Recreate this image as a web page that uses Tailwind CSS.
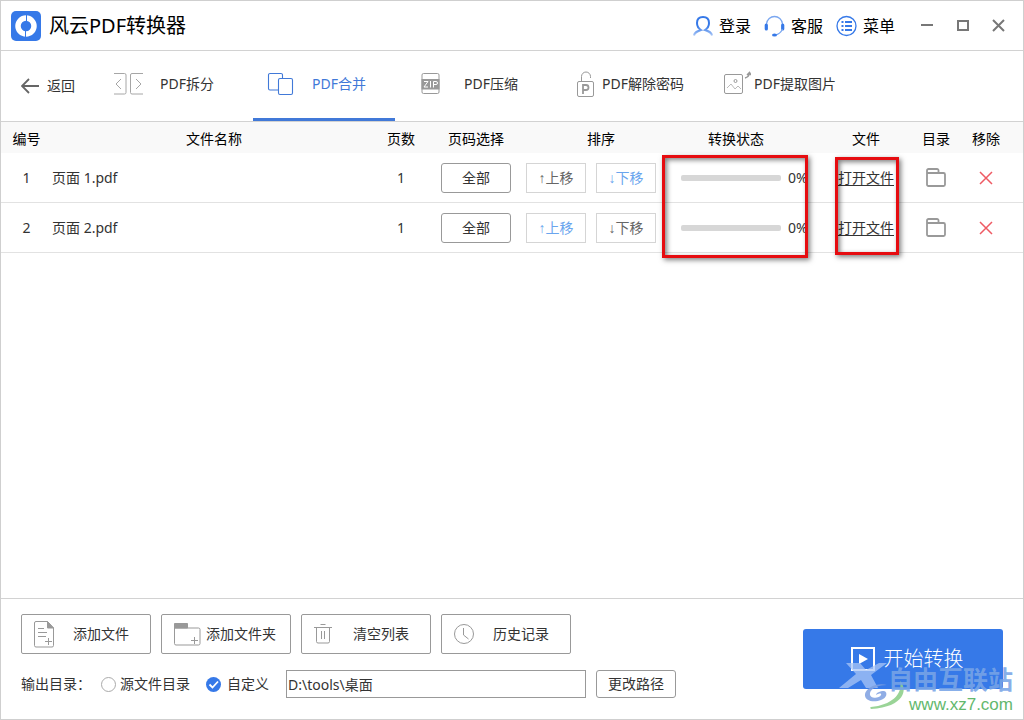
<!DOCTYPE html>
<html lang="zh-CN">
<head>
<meta charset="utf-8">
<meta name="viewport" content="width=device-width, initial-scale=1">
<title>风云PDF转换器</title>
<script src="https://cdn.jsdelivr.net/npm/@tailwindcss/browser@4"></script>
</head>
<body class="min-h-screen flex flex-col bg-white border border-[#cfcfcf] text-sm leading-5 text-[#333] font-['Noto_Sans','Noto_Sans_CJK_SC',sans-serif]">

<!-- Title bar -->
<header class="h-[50px] flex items-center border-b border-[#d2d2d2] pl-2.5 pr-4 text-black">
  <svg class="size-[30px] shrink-0" viewBox="0 0 30 30" aria-hidden="true">
    <rect width="30" height="30" rx="5" fill="#3679e8"/>
    <circle cx="15" cy="15" r="8" fill="none" stroke="#fff" stroke-width="5.5"/>
    <path d="M15.500 3v7M14.500 20v7" stroke="#3679e8" stroke-width="1"/>
  </svg>
  <h1 class="ml-2 text-xl leading-7 font-normal">风云PDF转换器</h1>
  <nav class="ml-auto flex items-center gap-[13px] text-base leading-6" aria-label="账户">
    <button type="button" class="flex items-center gap-1.5">
      <svg class="w-5 h-[22px]" viewBox="0 0 20 22" fill="none" aria-hidden="true">
        <defs><linearGradient id="fade" x1="0" y1="0" x2="0" y2="1"><stop offset="0.5" stop-color="#3679e8"/><stop offset="1" stop-color="#a9c6f6"/></linearGradient></defs>
        <path d="M1 20.500C1.500 17 4 16.500 8 15C5.500 13.500 4 11 4 8C4 4 6.500 2 10 2S16 4 16 8C16 11 14.500 13.500 12 15C16 16.500 18.500 17 19 20.500" stroke="url(#fade)" stroke-width="2"/>
      </svg>登录</button>
    <button type="button" class="flex items-center gap-1.5">
      <svg class="w-[21px] h-[22px]" viewBox="0 0 21 22" fill="none" aria-hidden="true">
        <path d="M2.500 9C3 4.500 6.500 1.500 10.500 1.500S18 4.500 18.500 9" stroke="#7ba7f0" stroke-width="1.300"/>
        <path d="M2.300 10v4M18.700 10v4" stroke="#3679e8" stroke-width="3.200" stroke-linecap="round"/>
        <path d="M18.500 14C17 17.500 14.500 19.500 11 20" stroke="#7ba7f0" stroke-width="1.200"/>
        <ellipse cx="10.500" cy="20" rx="2.500" ry="1.500" fill="#3679e8"/>
      </svg>客服</button>
    <button type="button" class="flex items-center gap-1.5">
      <svg class="w-[21px] h-[22px]" viewBox="0 0 21 22" fill="none" stroke="#3679e8" aria-hidden="true">
        <circle cx="10.500" cy="11" r="9.500" stroke-width="1.300"/>
        <path d="M5.500 7h2M9 7h7M5.500 11h2M9 11h7M5.500 15h2M9 15h7" stroke-width="1.800"/>
      </svg>菜单</button>
  </nav>
  <div class="ml-6 flex items-center gap-5 text-[#777]">
    <button type="button" aria-label="最小化"><svg class="size-4" viewBox="0 0 16 16" stroke="currentColor" stroke-width="2"><path d="M2 7h12"/></svg></button>
    <button type="button" aria-label="最大化"><svg class="size-4" viewBox="0 0 16 16" fill="none" stroke="currentColor" stroke-width="2"><rect x="3" y="3" width="10" height="9"/></svg></button>
    <button type="button" aria-label="关闭"><svg class="size-4" viewBox="0 0 16 16" stroke="currentColor" stroke-width="2"><path d="M2 2l11 11M13 2L2 13"/></svg></button>
  </div>
</header>

<!-- Tools -->
<nav class="h-[71px] flex border-b border-[#d2d2d2] pb-1" aria-label="工具">
  <button type="button" class="w-[100px] pl-5 flex items-center gap-2 pt-1">
    <svg class="w-[18px] h-4" viewBox="0 0 18 16" fill="none" stroke="#666" stroke-width="1.800" aria-hidden="true"><path d="M18 8H1M8 1L1 8l7 7"/></svg>返回</button>
  <button type="button" class="w-[152px] pl-3 flex items-center gap-4">
    <svg class="w-[31px] h-[22px]" viewBox="0 0 31 22" fill="none" stroke="#a6a6a6" aria-hidden="true"><path d="M1 .5h10.500a1.500 1.500 0 0 1 1.500 1.500v17.500a1.500 1.500 0 0 1-1.500 1.500H1M30 .5H19a1.500 1.500 0 0 0-1.500 1.500v17.500A1.500 1.500 0 0 0 19 21H30M8 6l-5 5 5 5M23 6l5 5-5 5"/></svg>PDF拆分</button>
  <button type="button" aria-current="page" class="relative w-[142px] pl-3.5 flex items-center gap-[18px] text-[#4179d8] after:absolute after:inset-x-0 after:-bottom-1 after:h-[3px] after:bg-[#4179d8]">
    <svg class="w-[27px] h-[24px]" viewBox="0 0 27 24" fill="none" stroke="currentColor" stroke-width="1.100" aria-hidden="true"><path d="M11 18H3a1.500 1.500 0 0 1-1.500-1.500V3A1.500 1.500 0 0 1 3 1.500h11A1.500 1.500 0 0 1 15.500 3v3"/><rect x="11.500" y="6.500" width="14" height="16" rx="1.500"/></svg>PDF合并</button>
  <button type="button" class="w-[170px] pl-[26px] flex items-center gap-6">
    <svg class="w-[19px] h-[22px]" viewBox="0 0 19 22" fill="none" stroke="#999" aria-hidden="true"><rect x="1" y=".5" width="17" height="20" rx="1.500"/><path d="M.5 6h18v10.500H.5z" fill="#999" stroke="none"/><path d="M3 8.500h4l-4 5.500h4M9.500 8v6.500M12.500 14.500v-6H15a1.500 1.500 0 0 1 0 3h-2.500" stroke="#fff"/></svg>PDF压缩</button>
  <button type="button" class="w-[146px] pl-3 flex items-center gap-[7px]">
    <svg class="w-[18px] h-[26px] shrink-0" viewBox="0 0 18 26" fill="none" stroke="#999" aria-hidden="true"><rect x=".5" y="10.500" width="16" height="15" rx="1.500"/><path d="M4.500 10V5.500a4.500 4.500 0 0 1 9 0V7"/><path d="M6 23v-9h3a2.500 2.500 0 0 1 0 5H6" stroke-width="1.800"/></svg><span class="whitespace-nowrap">PDF解除密码</span></button>
  <button type="button" class="w-[130px] pl-[13px] flex items-center gap-[3px]">
    <svg class="w-[27px] h-[26px] shrink-0" viewBox="0 0 27 26" fill="none" stroke="#999" aria-hidden="true"><rect x=".5" y="3.500" width="18" height="19" rx="1.500"/><circle cx="11.500" cy="10" r="1.500"/><path d="M3 17l4-4 4 5 3-3 3 3" stroke="#bbb"/><path d="M21 7q4-1 4.500-5M23 4l2.500-2.500L27 4" stroke-width="1.500"/></svg><span class="whitespace-nowrap">PDF提取图片</span></button>
</nav>

<!-- File list -->
<main class="relative flex-1">
  <table class="w-full table-fixed border-separate border-spacing-0 text-center [&_td]:border-b [&_td]:border-[#e2e2e2] [&_td]:p-0 [&_th]:font-normal [&_th]:pt-0.5">
    <colgroup>
      <col class="w-[51px]"><col><col class="w-[50px]"><col class="w-[100px]"><col class="w-[150px]"><col class="w-[145px]"><col class="w-[90px]"><col class="w-[50px]"><col class="w-[62px]">
    </colgroup>
    <thead class="bg-[#f9f9f9] text-black">
      <tr class="h-[31px]">
        <th>编号</th><th>文件名称</th><th>页数</th><th>页码选择</th><th>排序</th><th><div class="pr-[25px]">转换状态</div></th><th>文件</th><th>目录</th><th><div class="pr-3">移除</div></th>
      </tr>
    </thead>
    <tbody>
      <tr class="h-[50px]">
        <td>1</td><td class="text-left">页面 1.pdf</td><td>1</td>
        <td><button type="button" class="w-[70px] h-[30px] rounded-[3px] border border-[#999] align-middle">全部</button></td>
        <td><div class="flex gap-2.5"><button type="button" class="w-[60px] h-[30px] border border-[#d5d5d5] text-[#666]"><span class="font-['Liberation_Sans',sans-serif]">↑</span>上移</button><button type="button" class="w-[60px] h-[30px] border border-[#d5d5d5] text-[#6aa5ee]"><span class="font-['Liberation_Sans',sans-serif]">↓</span>下移</button></div></td>
        <td><div class="flex items-center gap-[7px] pl-[5px]"><div role="progressbar" aria-label="页面 1.pdf" aria-valuenow="0" aria-valuemin="0" aria-valuemax="100" class="w-[100px] h-1.5 rounded-[2px] bg-[#d7d7d7]"></div>0%</div></td>
        <td><a href="#" class="underline underline-offset-2">打开文件</a></td>
        <td><button type="button" aria-label="打开目录" class="block mx-auto"><svg class="w-5 h-[19px]" viewBox="0 0 20 19" fill="none" stroke="#999" stroke-width="1.800"><path d="M1 5V2.500A1.500 1.500 0 0 1 2.500 1H11a1.500 1.500 0 0 1 1.500 1.500V5M2.500 5h15A1.500 1.500 0 0 1 19 6.500v10a1.500 1.500 0 0 1-1.500 1.500h-15A1.500 1.500 0 0 1 1 16.500V5z"/></svg></button></td>
        <td><div class="pr-3"><button type="button" aria-label="移除" class="block mx-auto"><svg class="size-3.5" viewBox="0 0 14 14" stroke="#ee5a63" stroke-width="1.500"><path d="M1 1l12 12M13 1L1 13"/></svg></button></div></td>
      </tr>
      <tr class="h-[50px]">
        <td>2</td><td class="text-left">页面 2.pdf</td><td>1</td>
        <td><button type="button" class="w-[70px] h-[30px] rounded-[3px] border border-[#999] align-middle">全部</button></td>
        <td><div class="flex gap-2.5"><button type="button" class="w-[60px] h-[30px] border border-[#d5d5d5] text-[#6aa5ee]"><span class="font-['Liberation_Sans',sans-serif]">↑</span>上移</button><button type="button" class="w-[60px] h-[30px] border border-[#d5d5d5] text-[#666]"><span class="font-['Liberation_Sans',sans-serif]">↓</span>下移</button></div></td>
        <td><div class="flex items-center gap-[7px] pl-[5px]"><div role="progressbar" aria-label="页面 2.pdf" aria-valuenow="0" aria-valuemin="0" aria-valuemax="100" class="w-[100px] h-1.5 rounded-[2px] bg-[#d7d7d7]"></div>0%</div></td>
        <td><a href="#" class="underline underline-offset-2">打开文件</a></td>
        <td><button type="button" aria-label="打开目录" class="block mx-auto"><svg class="w-5 h-[19px]" viewBox="0 0 20 19" fill="none" stroke="#999" stroke-width="1.800"><path d="M1 5V2.500A1.500 1.500 0 0 1 2.500 1H11a1.500 1.500 0 0 1 1.500 1.500V5M2.500 5h15A1.500 1.500 0 0 1 19 6.500v10a1.500 1.500 0 0 1-1.500 1.500h-15A1.500 1.500 0 0 1 1 16.500V5z"/></svg></button></td>
        <td><div class="pr-3"><button type="button" aria-label="移除" class="block mx-auto"><svg class="size-3.5" viewBox="0 0 14 14" stroke="#ee5a63" stroke-width="1.500"><path d="M1 1l12 12M13 1L1 13"/></svg></button></div></td>
      </tr>
    </tbody>
  </table>
  <!-- Highlight frames over the status and file columns -->
  <div class="pointer-events-none absolute top-[33px] right-[215px] w-[146px] h-[103px] border-3 border-[#e60c10] shadow-[2px_2px_5px_rgba(0,0,0,0.5),inset_2px_2px_5px_rgba(0,0,0,0.5)]"></div>
  <div class="pointer-events-none absolute top-[35px] right-[124px] w-[64px] h-[98px] border-3 border-[#e60c10] shadow-[2px_2px_5px_rgba(0,0,0,0.5),inset_2px_2px_5px_rgba(0,0,0,0.5)]"></div>
</main>

<!-- Actions -->
<footer class="relative h-[121px] border-t border-[#d2d2d2] px-5 flex justify-between">
  <div class="pt-[15px] flex flex-col gap-4">
    <div class="flex gap-2.5">
      <button type="button" class="w-[130px] h-10 rounded-[2px] border border-[#999] flex items-center pl-3 gap-[18px]">
        <svg class="w-[21px] h-[27px]" viewBox="0 0 21 27" fill="none" stroke="#999" aria-hidden="true"><path d="M13.500 .5H2A1.500 1.500 0 0 0 .5 2v22.500A1.500 1.500 0 0 0 2 26h16a1.500 1.500 0 0 0 1.500-1.500V7zM4 7.500h6M4 11.500h9M4 15.500h8M11 20.500h7M14.500 17v7"/><path d="M13.500 .5L19.500 7h-6z" fill="#999"/></svg>添加文件</button>
      <button type="button" class="w-[130px] h-10 rounded-[2px] border border-[#999] flex items-center pl-3 gap-[5px]">
        <svg class="w-[27px] h-[23px] shrink-0" viewBox="0 0 27 23" fill="none" stroke="#999" aria-hidden="true"><path d="M.5 5h24a1.500 1.500 0 0 1 1.500 1.500v14a1.500 1.500 0 0 1-1.500 1.500H2A1.500 1.500 0 0 1 .5 20.500zM17 17.500h7M20.500 14v7"/><path d="M.5 .5h13V5H.5z" fill="#999"/></svg><span class="whitespace-nowrap">添加文件夹</span></button>
      <button type="button" class="w-[130px] h-10 rounded-[2px] border border-[#999] flex items-center pl-3 gap-5">
        <svg class="w-[19px] h-[21px]" viewBox="0 0 19 21" fill="none" stroke="#999" aria-hidden="true"><path d="M0 3.500h18M6.500 .5h5M2.500 3.500v14A1.500 1.500 0 0 0 4 19h10a1.500 1.500 0 0 0 1.500-1.500v-14M7.500 7v8M10.500 7v8"/></svg>清空列表</button>
      <button type="button" class="w-[130px] h-10 rounded-[2px] border border-[#999] flex items-center pl-3 gap-[18px]">
        <svg class="size-[21px]" viewBox="0 0 21 21" fill="none" stroke="#999" aria-hidden="true"><circle cx="10" cy="10" r="9.500"/><path d="M9.500 4v7l5 4"/></svg>历史记录</button>
    </div>
    <div class="flex items-center h-7">
      <span class="w-20">输出目录：</span>
      <label class="flex items-center gap-1"><input type="radio" name="out" class="appearance-none size-[15px] rounded-full border border-[#aaa]">源文件目录</label>
      <label class="ml-4 flex items-center gap-1.5"><span class="relative flex"><input type="radio" name="out" checked class="appearance-none size-[15px] rounded-full bg-[#3679e8]"><svg class="pointer-events-none absolute inset-0 size-[15px]" viewBox="0 0 15 15" fill="none" stroke="#fff" stroke-width="1.800"><path d="M3.500 7.500l3 3 5.500-6"/></svg></span>自定义</label>
      <input type="text" aria-label="输出路径" value="D:\tools\桌面" class="ml-[17px] w-[300px] h-7 border border-[#999] px-px">
      <button type="button" class="ml-2.5 w-20 h-7 rounded-[3px] border border-[#999]">更改路径</button>
    </div>
  </div>
  <button type="button" class="mt-[30px] w-[200px] h-[60px] rounded-[3px] bg-[#3679e8] text-white text-xl font-light flex items-center justify-center gap-[9px] pl-2">
    <svg class="size-6" viewBox="0 0 24 24" fill="none" stroke="#fff" stroke-width="2" aria-hidden="true"><rect x="1" y="1" width="22" height="22"/><path d="M8 7l9 5-9 5z" fill="#fff" stroke="none"/></svg>开始转换</button>
  <!-- Site mark, floats over the corner -->
  <div class="pointer-events-none absolute right-2.5 bottom-1 w-[176px] h-[60px]">
    <svg class="absolute left-0 top-0 w-[76px] h-[60px]" viewBox="0 0 76 60" aria-hidden="true">
      <path d="M9 8h14l6 7 13-7h8L34 20l7 13H29l-5-8-13 8H2L19 19z" fill="#a9c6f5" opacity=".75"/>
      <path d="M50 30c-10-3-21 3-22 9-1 7 9 9 16 6 6-2 7-8 3-9-4 0-8 2-8 4 3-2 6-2 5 0-2 4-12 4-11-2 1-5 9-8 17-8z" fill="#7d9fe0" opacity=".85"/>
      <path d="M63 26c8 8 5 26-29 28-1-1-1-2 0-2 20-2 32-12 29-26z" fill="#8fcf8c" opacity=".9"/>
    </svg>
    <div class="absolute right-0 top-2 text-[25px] leading-8 font-bold text-[#78a4e6]/90 whitespace-nowrap">自由互联站</div>
    <div class="absolute right-0 bottom-0 text-[17px] leading-5 text-[#63b86d] font-['Liberation_Sans',sans-serif]">www.xz7.com</div>
  </div>
</footer>
</body>
</html>
